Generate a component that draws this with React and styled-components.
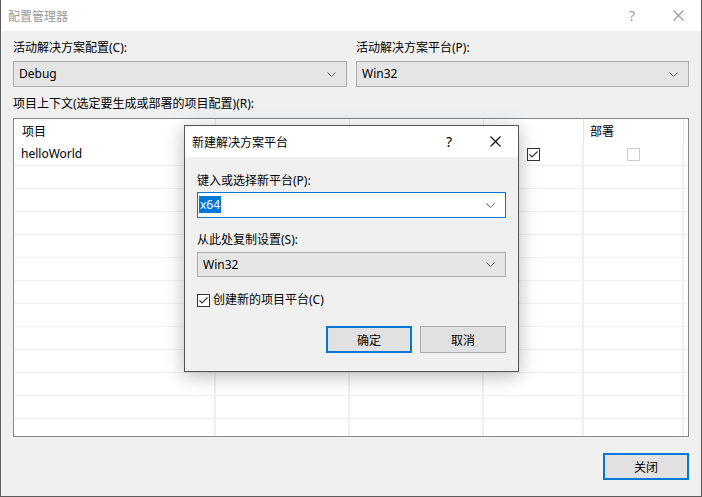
import React from 'react'
import styled, { createGlobalStyle } from 'styled-components'

const GlobalStyle = createGlobalStyle`
  html, body {
    margin: 0;
    padding: 0;
    overflow: hidden;
    background: #f0f0f0;
  }
  * {
    box-sizing: border-box;
  }
`;

const Window = styled.div`
  position: relative;
  width: 702px;
  height: 497px;
  display: flex;
  flex-direction: column;
  background: #f0f0f0;
  border: 1px solid #5c5c5c;
  border-top: none;
  font-family: "Noto Sans", "Noto Sans CJK SC", sans-serif;
  font-size: 12px;
  line-height: 16px;
  color: #000;
`;

const TitleBar = styled.div`
  height: 31px;
  flex-shrink: 0;
  display: flex;
  align-items: center;
  background: #fff;
  color: ${p => (p.$inactive ? '#999' : '#000')};
  padding-left: 7px;
`;

const TitleText = styled.div`
  flex: 1;
  font-family: "Noto Sans CJK SC", sans-serif;
`;

const CaptionButton = styled.div`
  width: 46px;
  height: 100%;
  display: flex;
  align-items: center;
  justify-content: center;
  font-size: 14px;
`;

const Body = styled.div`
  flex: 1;
  display: flex;
  flex-direction: column;
  padding: 0 12px;
`;

const TopRow = styled.div`
  display: grid;
  grid-template-columns: 334px 1fr;
  gap: 9px;
  margin-top: 9px;
`;

const Field = styled.div`
  display: flex;
  flex-direction: column;
  gap: 5px;
`;

const Label = styled.div`
  height: 16px;
  white-space: nowrap;
  margin-top: ${p => p.$mt || 0}px;
`;

const Combo = styled.div`
  height: ${p => p.$h || 26}px;
  display: flex;
  align-items: center;
  padding: 0 10px 0 5px;
  background: ${p => (p.$focused ? '#fff' : '#e5e5e5')};
  border: 1px solid ${p => (p.$focused ? '#0078d7' : '#adadad')};
  margin-top: ${p => p.$mt || 0}px;
`;

const ComboText = styled.div`
  flex: 1;
`;

const Selected = styled.span`
  background: #0078d7;
  color: #fff;
  padding: 0 1px;
  margin-left: -4px;
`;

const Table = styled.div`
  height: 319px;
  margin-top: 6px;
  background: #fff;
  border: 1px solid #828790;
  overflow: hidden;
`;

const GridRow = styled.div`
  display: grid;
  grid-template-columns: 202px 134px 134px 100px 100px 1fr;
  height: ${p => (p.$head ? 24 : 23)}px;
  border-bottom: ${p => (p.$head ? 'none' : '1px solid #f0f0f0')};
`;

const HeadCell = styled.div`
  display: flex;
  align-items: center;
  padding-left: ${p => (p.$left ? 8 : 6)}px;
  border-right: 1px solid #e5e5e5;
  font-family: "Noto Sans CJK SC", sans-serif;
`;

const Cell = styled.div`
  display: flex;
  align-items: center;
  justify-content: ${p => (p.$center ? 'center' : 'flex-start')};
  padding-left: ${p => (p.$center ? 0 : 7)}px;
  border-right: 2px solid #eef0f4;
`;

const Footer = styled.div`
  display: flex;
  justify-content: flex-end;
  margin-top: 16px;
`;

const Button = styled.div`
  width: 86px;
  height: 27px;
  display: flex;
  align-items: center;
  justify-content: center;
  background: #e1e1e1;
  border: ${p => (p.$default ? '2px solid #0078d7' : '1px solid #adadad')};
  font-family: "Noto Sans CJK SC", sans-serif;
`;

const Box = styled.div`
  width: 13px;
  height: 13px;
  display: flex;
  align-items: center;
  justify-content: center;
  background: #fff;
  border: 1px solid ${p => (p.$disabled ? '#cccccc' : '#333')};
`;

const Dialog = styled.div`
  position: absolute;
  left: 183px;
  top: 125px;
  width: 335px;
  height: 247px;
  display: flex;
  flex-direction: column;
  background: #f0f0f0;
  border: 1px solid #555;
  box-shadow: 0 4px 18px rgba(0, 0, 0, 0.28);
`;

const DialogBody = styled.div`
  display: flex;
  flex-direction: column;
  padding: 16px 12px 0 12px;
`;

const CheckRow = styled.div`
  display: flex;
  align-items: center;
  gap: 3px;
  margin-top: 15px;
`;

const ButtonRow = styled.div`
  display: flex;
  justify-content: flex-end;
  gap: 8px;
  margin-top: 18px;
`;

const Chevron = () => (
  <svg width="9" height="5" viewBox="0 0 9 5">
    <path d="M0.5 0.5 L4.5 4.5 L8.5 0.5" fill="none" stroke="#606060" strokeWidth="1" />
  </svg>
);

const CloseGlyph = ({ color }) => (
  <svg width="11" height="11" viewBox="0 0 11 11">
    <path d="M0.5 0.5 L10.5 10.5 M10.5 0.5 L0.5 10.5" stroke={color} strokeWidth="1.1" />
  </svg>
);

const CheckBox = ({ checked, disabled }) => (
  <Box $disabled={disabled}>
    {checked && (
      <svg width="11" height="11" viewBox="0 0 11 11">
        <path d="M1.5 5.5 L4 8 L9.5 2.5" fill="none" stroke="#333" strokeWidth="1.1" />
      </svg>
    )}
  </Box>
);

const emptyRows = Array.from({ length: 13 });

const App = () => {
  return (
    <>
      <GlobalStyle />
      <Window>
        <TitleBar $inactive>
          <TitleText>配置管理器</TitleText>
          <CaptionButton>?</CaptionButton>
          <CaptionButton>
            <CloseGlyph color="#999" />
          </CaptionButton>
        </TitleBar>
        <Body>
          <TopRow>
            <Field>
              <Label>活动解决方案配置(C):</Label>
              <Combo>
                <ComboText>Debug</ComboText>
                <Chevron />
              </Combo>
            </Field>
            <Field>
              <Label>活动解决方案平台(P):</Label>
              <Combo>
                <ComboText>Win32</ComboText>
                <Chevron />
              </Combo>
            </Field>
          </TopRow>
          <Label $mt={9}>项目上下文(选定要生成或部署的项目配置)(R):</Label>
          <Table>
            <GridRow $head>
              <HeadCell $left>项目</HeadCell>
              <HeadCell />
              <HeadCell />
              <HeadCell />
              <HeadCell>部署</HeadCell>
              <HeadCell />
            </GridRow>
            <GridRow>
              <Cell>helloWorld</Cell>
              <Cell />
              <Cell />
              <Cell $center>
                <CheckBox checked />
              </Cell>
              <Cell $center>
                <CheckBox disabled />
              </Cell>
              <Cell />
            </GridRow>
            {emptyRows.map((_, i) => (
              <GridRow key={i}>
                <Cell />
                <Cell />
                <Cell />
                <Cell />
                <Cell />
                <Cell />
              </GridRow>
            ))}
          </Table>
          <Footer>
            <Button $default>关闭</Button>
          </Footer>
        </Body>

        <Dialog>
          <TitleBar>
            <TitleText>新建解决方案平台</TitleText>
            <CaptionButton>?</CaptionButton>
            <CaptionButton>
              <CloseGlyph color="#000" />
            </CaptionButton>
          </TitleBar>
          <DialogBody>
            <Label>键入或选择新平台(P):</Label>
            <Combo $focused $mt={3}>
              <ComboText>
                <Selected>x64</Selected>
              </ComboText>
              <Chevron />
            </Combo>
            <Label $mt={14}>从此处复制设置(S):</Label>
            <Combo $mt={4} $h={25}>
              <ComboText>Win32</ComboText>
              <Chevron />
            </Combo>
            <CheckRow>
              <CheckBox checked />
              <span>创建新的项目平台(C)</span>
            </CheckRow>
            <ButtonRow>
              <Button $default>确定</Button>
              <Button>取消</Button>
            </ButtonRow>
          </DialogBody>
        </Dialog>
      </Window>
    </>
  )
}

export default App
